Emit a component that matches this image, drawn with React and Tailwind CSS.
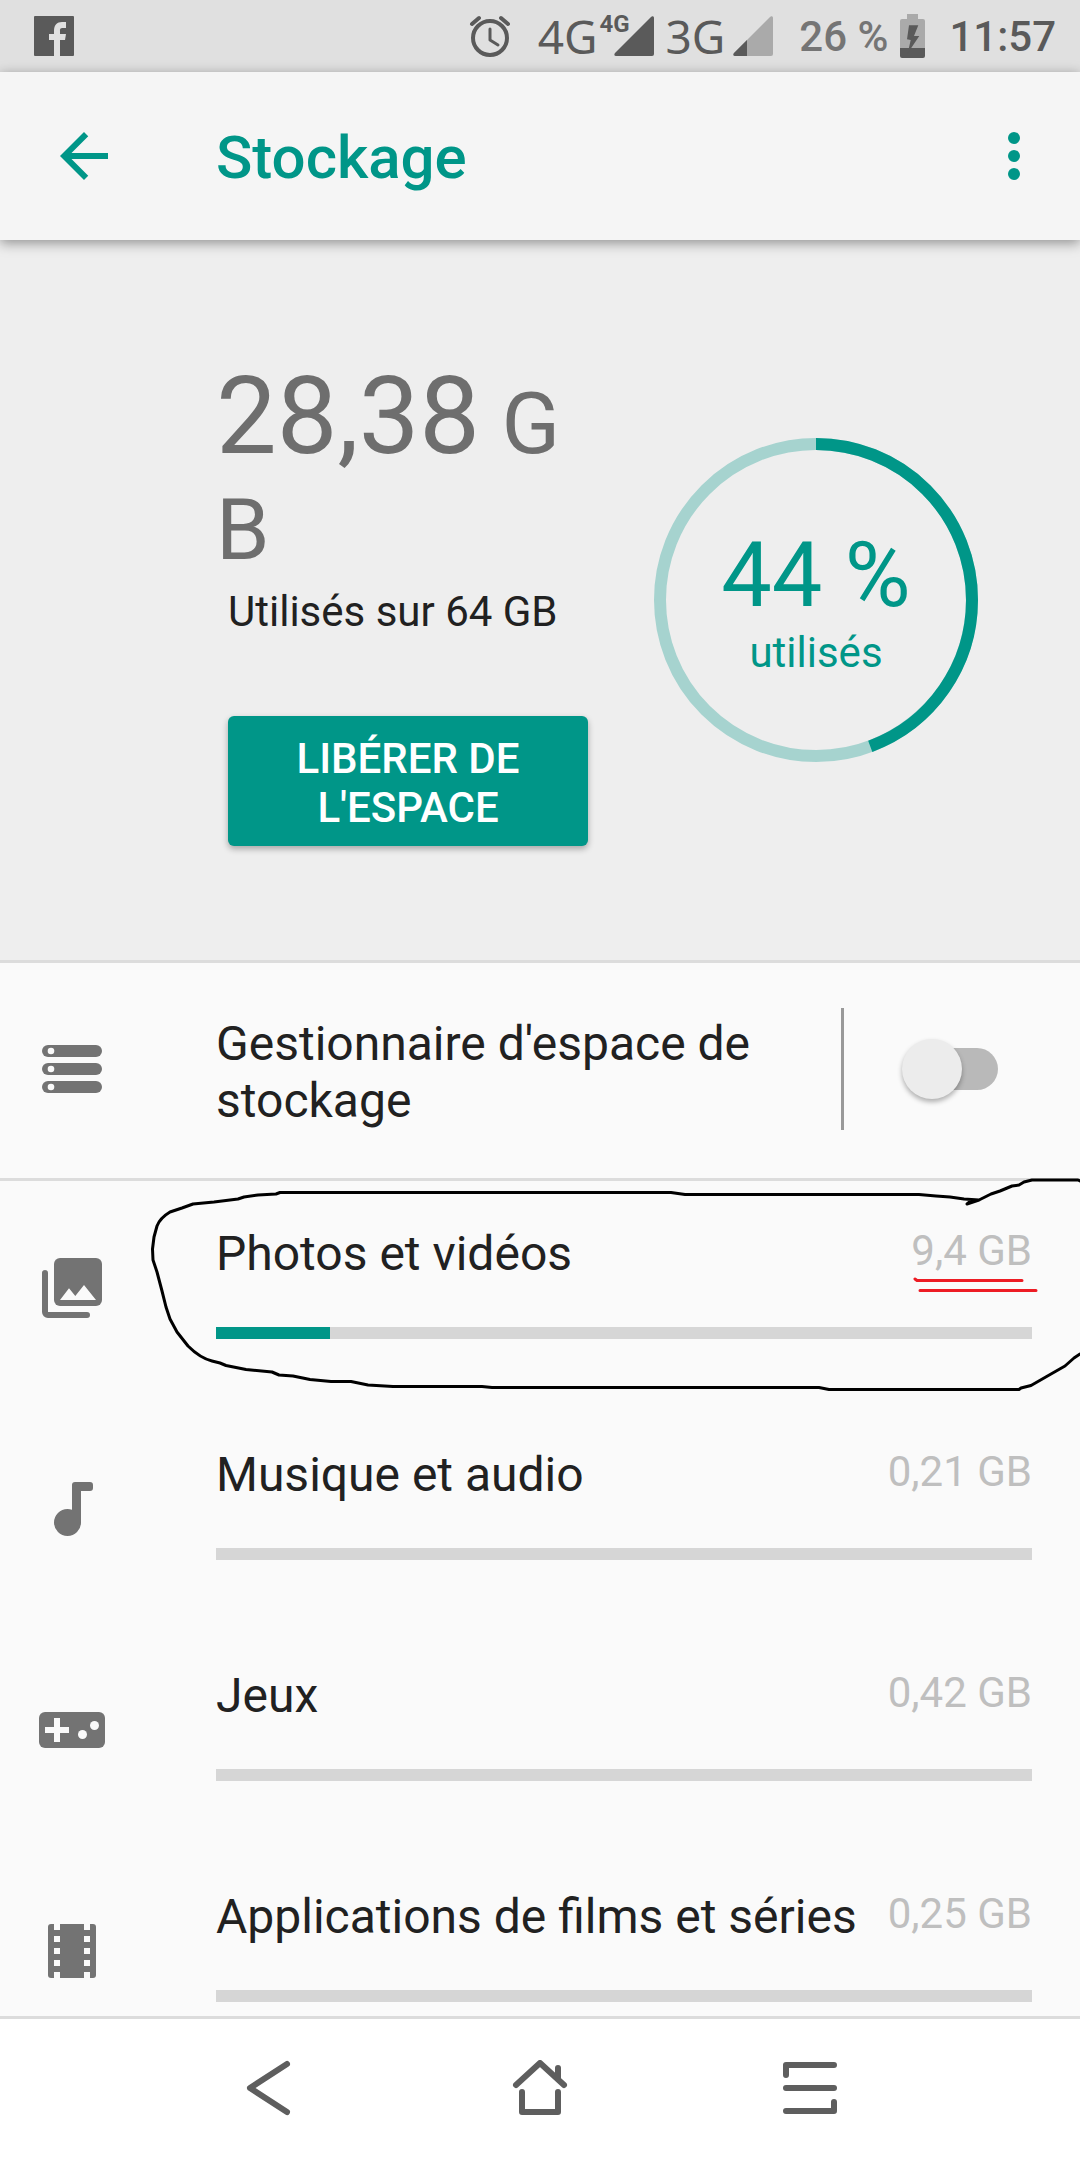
import { useState } from 'react'

const usedGb = 28.38
const totalGb = 64

const categories = [
  { label: 'Photos et vidéos', size: '9,4 GB', percent: 14, icon: PhotoIcon, marked: true },
  { label: 'Musique et audio', size: '0,21 GB', percent: 0, icon: MusicIcon },
  { label: 'Jeux', size: '0,42 GB', percent: 0, icon: GameIcon },
  { label: 'Applications de films et séries', size: '0,25 GB', percent: 0, icon: FilmIcon },
]

function StorageIcon() {
  return (
    <svg viewBox="0 0 24 24" className="size-[72px] shrink-0" fill="#737373" aria-hidden="true">
      {[4, 10, 16].map((y) => (
        <g key={y}>
          <rect x="2" y={y} width="20" height="4" rx="2" />
          <circle cx="5" cy={y + 2} r="1.1" fill="#fafafa" />
        </g>
      ))}
    </svg>
  )
}

function PhotoIcon() {
  return (
    <svg viewBox="0 0 24 24" className="size-[72px] shrink-0" fill="#737373" aria-hidden="true">
      <rect x="6" y="2" width="16" height="16" rx="2" />
      <path d="M8 16l3-3.9 2.1 2.6L16 11l4 5z" fill="#fafafa" />
      <path d="M3 7v13a1 1 0 0 0 1 1h13" fill="none" stroke="#737373" strokeWidth="2" strokeLinecap="round" />
    </svg>
  )
}

function MusicIcon() {
  return (
    <svg viewBox="0 0 24 24" className="size-[72px] shrink-0" fill="#737373" aria-hidden="true">
      <path d="M13 3h5a1 1 0 0 1 1 1v1a1 1 0 0 1-1 1h-3v10.5A4.5 4.5 0 1 1 10.500 12a4.400 4.400 0 0 1 1.500.25V4a1 1 0 0 1 1-1z" />
    </svg>
  )
}

function GameIcon() {
  return (
    <svg viewBox="0 0 24 24" className="size-[72px] shrink-0" fill="#737373" aria-hidden="true">
      <rect x="1" y="6" width="22" height="12" rx="2" />
      <g fill="#fafafa">
        <path d="M6 8h2v3h3v2H8v3H6v-3H3v-2h3z" />
        <circle cx="15.5" cy="13.5" r="1.5" />
        <circle cx="19.5" cy="10.5" r="1.5" />
      </g>
    </svg>
  )
}

function FilmIcon() {
  return (
    <svg viewBox="0 0 24 24" className="size-[72px] shrink-0" fill="#737373" aria-hidden="true">
      <rect x="4" y="3" width="16" height="18" rx="1" />
      <g fill="#fafafa">
        {[3, 7, 11, 15, 19].map((y) => (
          <path key={y} d={`M6 ${y}h2v2H6zM16 ${y}h2v2h-2z`} />
        ))}
      </g>
    </svg>
  )
}

function SignalIcon({ weak }) {
  return (
    <svg viewBox="0 0 40 40" className="size-10" aria-hidden="true">
      <path d="M2 40h36a2 2 0 0 0 2-2V2c0-2-2-2-3-1L1 37c-1 1-1 3 1 3z" fill={weak ? '#aaaaaa' : '#5a5a5a'} />
      {weak && <path d="M2 40h12V24L1 37c-1 1-1 3 1 3z" fill="#5a5a5a" />}
    </svg>
  )
}

function StatusBar() {
  return (
    <div className="flex h-[72px] shrink-0 items-center bg-[#e0e0e0] pr-6 pl-[34px] text-[#5a5a5a]">
      <svg viewBox="0 0 40 40" className="size-10" aria-label="Facebook">
        <rect width="40" height="40" rx="1" fill="#5a5a5a" />
        <path d="M20 40V24h-5v-6h5v-3c0-6 3-9 8-9h4v6h-3c-3 0-3 1-3 3v3h6l-1 6h-5v16z" fill="#e0e0e0" />
      </svg>

      <div className="ml-auto flex items-center">
        <svg viewBox="0 0 48 48" className="size-12" fill="none" stroke="#5a5a5a" strokeLinecap="round" aria-label="Alarme">
          <circle cx="24" cy="26" r="17" strokeWidth="4" />
          <path d="M6 12l7-6M35 6l7 6" strokeWidth="4" />
          <path d="M24 17v11l8 5" strokeWidth="3" strokeLinejoin="round" />
        </svg>

        <div className="ml-6 flex items-center">
          <span className="font-['Noto_Sans',sans-serif] text-[46px] leading-[60px]">4G</span>
          <div className="relative ml-4">
            <SignalIcon />
            <span className="absolute -top-1 right-6 text-[24px] leading-6 font-bold">4G</span>
          </div>
        </div>

        <div className="ml-3 flex items-center gap-2">
          <span className="font-['Noto_Sans',sans-serif] text-[46px] leading-[60px]">3G</span>
          <SignalIcon weak />
        </div>

        <span className="ml-[26px] text-[42px] leading-[49px] font-medium text-[#757575]">26 %</span>

        <svg viewBox="0 0 25 44" className="ml-3 h-11 w-[25px]" aria-label="Batterie en charge">
          <path d="M7 0h11v5h5a2 2 0 0 1 2 2v27H0V7a2 2 0 0 1 2-2h5z" fill="#aaaaaa" />
          <path d="M0 34h25v8a2 2 0 0 1-2 2H2a2 2 0 0 1-2-2z" fill="#5a5a5a" />
          <path d="M9 11.300h9.300L14 22h5.300L7.700 39.300 10.700 26 7 25.300z" fill="#5a5a5a" />
        </svg>

        <time className="ml-6 text-[42px] leading-[49px] font-medium">11:57</time>
      </div>
    </div>
  )
}

function Header() {
  return (
    <header className="relative z-10 flex h-[168px] shrink-0 items-center bg-[#f5f5f5] pr-[30px] pl-12 text-[#009688] shadow-[0_3px_12px_rgba(0,0,0,0.4)]">
      <button type="button" aria-label="Retour">
        <svg viewBox="0 0 24 24" className="size-[72px]" fill="currentColor">
          <path d="M20 11H7.83l5.59-5.59L12 4l-8 8 8 8 1.41-1.41L7.83 13H20v-2z" />
        </svg>
      </button>
      <h1 className="ml-24 flex-1 pt-1 text-[60px] leading-[70px] font-medium">Stockage</h1>
      <button type="button" aria-label="Plus d'options">
        <svg viewBox="0 0 24 24" className="size-[72px]" fill="currentColor">
          <circle cx="12" cy="6" r="2" />
          <circle cx="12" cy="12" r="2" />
          <circle cx="12" cy="18" r="2" />
        </svg>
      </button>
    </header>
  )
}

function UsageRing({ used, total }) {
  const percent = (used / total) * 100

  return (
    <div className="relative flex size-[324px] shrink-0 flex-col items-center justify-center text-[#009688]">
      <svg viewBox="0 0 324 324" className="absolute inset-0 size-full -rotate-90" fill="none" strokeWidth="12">
        <circle cx="162" cy="162" r="156" stroke="#a6d3cf" />
        <circle cx="162" cy="162" r="156" stroke="#009688" pathLength="100" strokeDasharray={`${percent} 100`} />
      </svg>
      <span className="text-[90px] leading-[105px]">{Math.round(percent)} %</span>
      <span className="text-[42px] leading-[49px]">utilisés</span>
    </div>
  )
}

function Summary() {
  return (
    <section className="flex min-h-[723px] items-center justify-between border-b-3 border-[#dcdcdc] bg-[#eeeeee] pr-[102px] pl-[216px]">
      <div className="w-96 pt-2">
        <p className="text-[108px] leading-[106px] whitespace-nowrap text-[#6e6e6e]">
          28,38<span className="text-[86px] leading-none"> G<br />B</span>
        </p>
        <p className="mt-3 pl-3 text-[42px] leading-[49px] whitespace-nowrap text-[#212121]">Utilisés sur 64 GB</p>
        <div className="px-3 pt-20">
          <button
            type="button"
            className="w-full rounded-md bg-[#009688] px-12 pt-[18px] pb-[14px] text-[42px] leading-[49px] font-medium text-white uppercase shadow-[0_3px_6px_rgba(0,0,0,0.3)]"
          >
            Libérer de l'espace
          </button>
        </div>
      </div>
      <UsageRing used={usedGb} total={totalGb} />
    </section>
  )
}

function ManagerRow() {
  const [enabled, setEnabled] = useState(false)

  return (
    <section className="flex items-center border-b-3 border-[#dcdcdc] pt-[45px] pr-[82px] pb-12 pl-9">
      <StorageIcon />
      <label htmlFor="manager" className="ml-[108px] flex-1 pt-1.5 text-[48px] leading-[57px] text-[#212121]">
        Gestionnaire d'espace de stockage
      </label>
      <div className="h-[122px] w-[3px] bg-[#999999]" />
      <div className="relative ml-[58px] flex h-[60px] w-24 items-center">
        <input
          id="manager"
          type="checkbox"
          role="switch"
          checked={enabled}
          onChange={(e) => setEnabled(e.target.checked)}
          className="peer ml-2 h-[42px] w-[88px] appearance-none rounded-full bg-[#b9b9b9] checked:bg-[#80cbc4]"
        />
        <span className="pointer-events-none absolute top-0 left-0 size-[60px] rounded-full bg-[#ececec] shadow-[0_3px_5px_rgba(0,0,0,0.3)] peer-checked:right-0 peer-checked:left-auto peer-checked:bg-[#009688]" />
      </div>
    </section>
  )
}

// Freehand pen marks drawn around a category
function PenMarks() {
  return (
    <svg
      viewBox="0 0 1080 221"
      className="pointer-events-none absolute inset-0 size-full overflow-visible"
      fill="none"
      strokeWidth="3"
      strokeLinecap="round"
      strokeLinejoin="round"
      aria-hidden="true"
    >
      <path
        stroke="#000000"
        d="M1080 0L1078 -1H1032L1024 1 1019 4 1012 5 1000 10 991 13 979 19 973 21 967 23 972 19 979 19 964 18 950 16 936 15 919 13.5 H685L671 11.5H280L276 13 258 14 244 16 238 18 214 21 193 23 182 27 170 31Q160 37 157 45L154 56 152.500 68 153 79 157 91 162 110 166 126 170 138 177 151 188 165Q200 177 212 180L220 182 226 184.500 246 188.500 272 191 279 194 293 195 310 198.500 331 200.500H351L368 204 393 205.500H482L492 206.500H819L829 208.500H1019L1021 207 1031 204.500 1051 193 1065 185 1074 177 1080 173"
      />
      <path stroke="#ed1c24" d="M915 98L917 99.500H1022M920 109.500H1036" />
    </svg>
  )
}

function CategoryRow({ item }) {
  const Icon = item.icon

  return (
    <li className="relative flex items-start pr-12 pb-[63px] pl-9">
      <div className="pt-[71px]">
        <Icon />
      </div>
      <div className="ml-[108px] flex-1 pt-[45px]">
        <div className="flex items-start justify-between">
          <span id={item.label} className="text-[48px] leading-[56px] whitespace-nowrap text-[#212121]">{item.label}</span>
          <span className="text-[42px] leading-[49px] whitespace-nowrap text-[#bfbfbf]">{item.size}</span>
        </div>
        <div
          role="progressbar"
          aria-labelledby={item.label}
          aria-valuenow={item.percent}
          className="mt-[45px] h-3 bg-[#d6d6d6]"
        >
          <div className="h-full bg-[#009688]" style={{ width: `${item.percent}%` }} />
        </div>
      </div>
      {item.marked && <PenMarks />}
    </li>
  )
}

function NavBar() {
  return (
    <nav className="grid h-36 shrink-0 grid-cols-3 items-center justify-items-center border-t-3 border-[#dcdcdc] bg-white px-[12.5%] text-[#5e5e5e]">
      <button type="button" aria-label="Précédent">
        <svg viewBox="0 0 60 60" className="size-[60px]" fill="none" stroke="currentColor" strokeWidth="6" strokeLinecap="round" strokeLinejoin="round">
          <path d="M47 4L10 28l37 24" />
        </svg>
      </button>
      <button type="button" aria-label="Accueil">
        <svg viewBox="0 0 60 60" className="size-[60px]" fill="none" stroke="currentColor" strokeWidth="6" strokeLinecap="round" strokeLinejoin="round">
          <path d="M6 25L30 3l24 22" />
          <path d="M48 8v10" />
          <path d="M12 32v20h36V32" />
        </svg>
      </button>
      <button type="button" aria-label="Applications récentes">
        <svg viewBox="0 0 60 60" className="size-[60px]" fill="none" stroke="currentColor" strokeWidth="6" strokeLinecap="round" strokeLinejoin="round">
          <path d="M6 15V5h48" />
          <path d="M6 28h48" />
          <path d="M6 51h48V42" />
        </svg>
      </button>
    </nav>
  )
}

function App() {
  return (
    <div className="flex h-screen flex-col bg-[#fafafa] font-[Roboto,sans-serif]">
      <StatusBar />
      <Header />
      <main className="min-h-0 flex-1 overflow-y-auto [scrollbar-width:none]">
        <Summary />
        <ManagerRow />
        <ul>
          {categories.map((item) => (
            <CategoryRow key={item.label} item={item} />
          ))}
        </ul>
      </main>
      <NavBar />
    </div>
  )
}

export default App
